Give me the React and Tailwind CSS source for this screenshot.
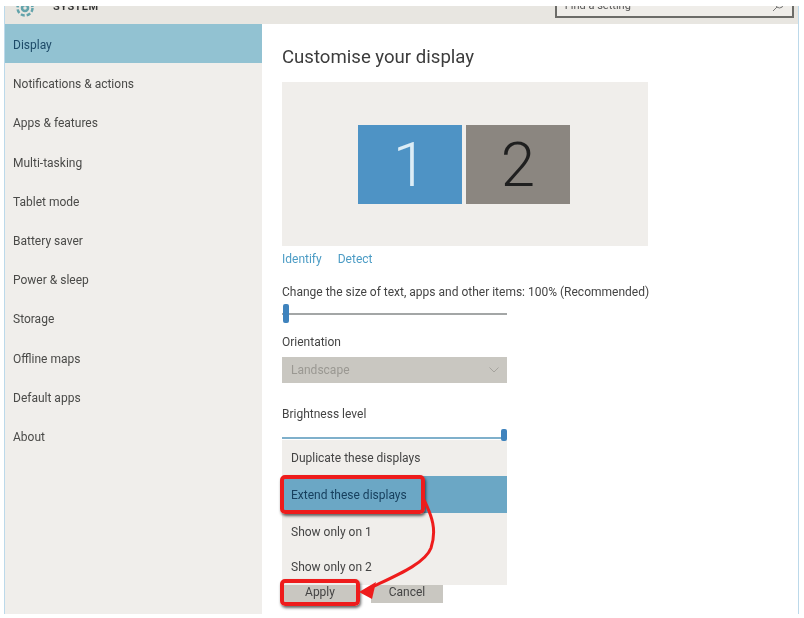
import React from 'react';

const navItems = [
  'Display',
  'Notifications & actions',
  'Apps & features',
  'Multi-tasking',
  'Tablet mode',
  'Battery saver',
  'Power & sleep',
  'Storage',
  'Offline maps',
  'Default apps',
  'About',
];

function GearIcon() {
  return (
    <svg width="20" height="20" viewBox="0 0 20 20" fill="none" stroke="#62a3ab" strokeWidth="2.5">
      <circle cx="10" cy="10" r="3" />
      <circle cx="10" cy="10" r="7.5" strokeDasharray="4 2" />
    </svg>
  );
}

function Sidebar() {
  return (
    <aside className="w-[257px] h-[590px] bg-[#f0eeeb] flex flex-col">
      {navItems.map((item, i) => (
        <div
          key={item}
          className={`h-[39.2px] shrink-0 flex items-center pl-[8px] pt-[3px] text-[12px] ${
            i === 0 ? 'bg-[#92c2d2] text-[#1d4a68]' : 'text-[#4a4a48]'
          }`}
        >
          {item}
        </div>
      ))}
    </aside>
  );
}

function Slider({ blue, thumbRight }) {
  return (
    <div className={`relative w-[225px] h-[2px] ${blue ? 'bg-[#7fb0cb]' : 'bg-[#a3a6a6]'}`}>
      <div
        className={`absolute w-[6px] rounded-[2px] bg-[#3f83bd] ${
          thumbRight ? 'right-0 -top-[8px] h-[12px]' : 'left-[1px] -top-[9px] h-[19px]'
        }`}
      />
    </div>
  );
}

function DisplayMenu() {
  return (
    <div className="mt-[1px] w-[225px] h-[145px] bg-[#f0eeeb] text-[12px] text-[#444] flex flex-col">
      <div className="h-[36px] flex items-center pl-[9px]">Duplicate these displays</div>
      <div className="relative h-[37px] flex items-center pl-[9px] pt-[1px] bg-[#6ba7c5] text-[#17405e]">
        Extend these displays
        <div className="absolute left-[-2px] top-[-1px] w-[145px] h-[39px] rounded-[5px] border-4 border-[#ee1c1c] shadow-[1px_2px_3px_rgba(0,0,0,0.6)]" />
      </div>
      <div className="h-[36px] flex items-center pl-[9px] pt-[1px]">Show only on 1</div>
      <div className="h-[36px] flex items-center pl-[9px]">Show only on 2</div>
    </div>
  );
}

function Main() {
  return (
    <main className="flex-1 pl-[20px] text-[#444]">
      <h1 className="h-[58px] pt-[19px] text-[18.6px] leading-[28px] text-[#3c3c3c]">Customise your display</h1>

      <div className="w-[366px] h-[164px] bg-[#f0eeeb] flex justify-center pt-[43px] pr-[2px] gap-[4px]">
        <div className="w-[104px] h-[79px] bg-[#4e93c5] text-[#dcedf6] flex items-center justify-center text-[62px] font-light">1</div>
        <div className="w-[104px] h-[79px] bg-[#8b8680] text-[#1f1f1f] flex items-center justify-center text-[62px] font-light">2</div>
      </div>

      <div className="flex gap-[16px] mt-[1px] h-[24px] items-center text-[12px] text-[#4c9cc5]">
        <span>Identify</span>
        <span>Detect</span>
      </div>

      <p className="mt-[12px] h-[18px] leading-[18px] text-[12px] whitespace-nowrap">Change the size of text, apps and other items: 100% (Recommended)</p>
      <div className="mt-[12px]">
        <Slider />
      </div>

      <p className="mt-[18px] h-[18px] leading-[18px] text-[12px]">Orientation</p>
      <div className="mt-[6px] w-[225px] h-[26px] bg-[#c9c7c1] flex items-center justify-between pl-[9px] pr-[8px] text-[12px] text-[#9a9892]">
        Landscape
        <svg width="10" height="6" viewBox="0 0 10 6" fill="none" stroke="#a5a39d" strokeWidth="1">
          <path d="M0.5 0.5 L5 5 L9.5 0.5" />
        </svg>
      </div>

      <p className="mt-[22px] h-[18px] leading-[18px] text-[12px]">Brightness level</p>
      <div className="mt-[14px]">
        <Slider blue thumbRight />
      </div>
      <DisplayMenu />

      <div className="flex gap-[13px] text-[12px]">
        <div className="relative w-[76px] h-[18px] bg-[#c9c7c1] flex items-center justify-center pb-[4px]">
          Apply
          <div className="absolute left-[-2px] top-[-6px] w-[80px] h-[27px] rounded-[5px] border-4 border-[#ee1c1c] shadow-[1px_2px_3px_rgba(0,0,0,0.6)]" />
        </div>
        <div className="w-[72px] h-[18px] bg-[#c9c7c1] flex items-center justify-center pb-[4px]">Cancel</div>
      </div>
    </main>
  );
}

export default function App() {
  return (
    <div className="relative w-[804px] h-[618px] overflow-hidden bg-white pt-[6px] blur-[0.7px] font-['Roboto','Liberation_Sans',sans-serif]">
      <div className="ml-[4px] w-[795px] h-[608px] border-x border-[#bcd9ea] flex flex-col">
        <header className="h-[18px] shrink-0 bg-[#e8e6e1] overflow-hidden flex items-end pl-[10px]">
          <div className="flex items-center gap-[18px] mb-[6px] text-[#333]">
            <GearIcon />
            <span className="text-[11px] font-semibold tracking-[0.5px] -mt-[2px]">SYSTEM</span>
          </div>
          <div className="ml-[456px] mb-[6px] w-[239px] h-[24px] shrink-0 border-2 border-[#6c6c68] bg-[#efede9] flex items-center justify-between px-[8px] text-[11px] text-[#555]">
            Find a setting
            <svg width="12" height="12" viewBox="0 0 12 12" fill="none" stroke="#777" strokeWidth="1">
              <circle cx="7.5" cy="4.5" r="3.5" />
              <path d="M5 7 L1 11" />
            </svg>
          </div>
        </header>
        <div className="flex">
          <Sidebar />
          <Main />
        </div>
      </div>

      {/* red arrow from the Extend box down to Apply */}
      <svg className="absolute left-0 top-0 pointer-events-none" width="804" height="618" fill="none">
        <path d="M424 500 C432 516 437 530 431 548 C425 564 395 576 368 589" stroke="#ee1c1c" strokeWidth="3" />
        <path d="M359 592 L376 582 L372 599 Z" fill="#ee1c1c" />
      </svg>
    </div>
  );
}
